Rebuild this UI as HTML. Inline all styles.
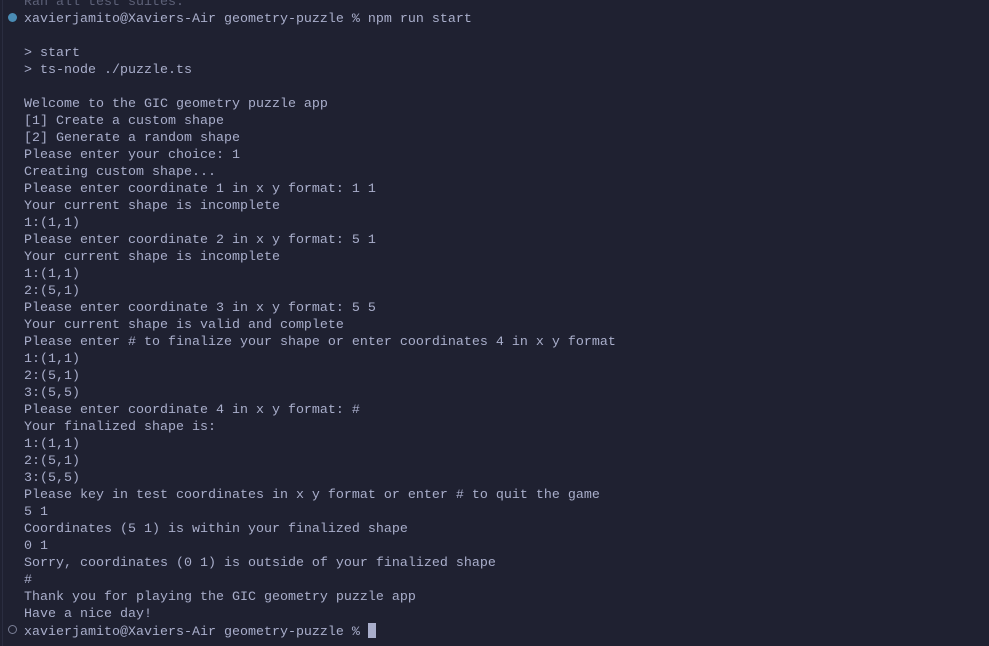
<!DOCTYPE html>
<html><head><style>
html,body{margin:0;padding:0;width:989px;height:646px;overflow:hidden;background:#1f2131;}
.t{position:absolute;left:24px;top:-6px;font-family:"Liberation Mono",monospace;font-size:13.33px;line-height:17px;color:#a9aecb;white-space:pre;}
.dim{color:#5d6178;}
.dot{position:absolute;left:8px;width:9px;height:9px;border-radius:50%;}
.cur{display:inline-block;width:8px;height:15px;background:#a9aecb;vertical-align:-3px;}
.edge{position:absolute;left:2px;top:0;width:1px;height:646px;background:#2a2d40;}
</style></head><body>
<div class="edge"></div>
<div class="dot" style="top:13px;background:#4a8cb5;"></div>
<div class="dot" style="top:625px;width:7px;height:7px;border:1px solid #7a7f96;"></div>
<div class="t"><span class="dim">Ran all test suites.</span>
xavierjamito@Xaviers-Air geometry-puzzle % npm run start

&gt; start
&gt; ts-node ./puzzle.ts

Welcome to the GIC geometry puzzle app
[1] Create a custom shape
[2] Generate a random shape
Please enter your choice: 1
Creating custom shape...
Please enter coordinate 1 in x y format: 1 1
Your current shape is incomplete
1:(1,1)
Please enter coordinate 2 in x y format: 5 1
Your current shape is incomplete
1:(1,1)
2:(5,1)
Please enter coordinate 3 in x y format: 5 5
Your current shape is valid and complete
Please enter # to finalize your shape or enter coordinates 4 in x y format
1:(1,1)
2:(5,1)
3:(5,5)
Please enter coordinate 4 in x y format: #
Your finalized shape is:
1:(1,1)
2:(5,1)
3:(5,5)
Please key in test coordinates in x y format or enter # to quit the game
5 1
Coordinates (5 1) is within your finalized shape
0 1
Sorry, coordinates (0 1) is outside of your finalized shape
#
Thank you for playing the GIC geometry puzzle app
Have a nice day!
xavierjamito@Xaviers-Air geometry-puzzle % <span class="cur"></span></div>
</body></html>
